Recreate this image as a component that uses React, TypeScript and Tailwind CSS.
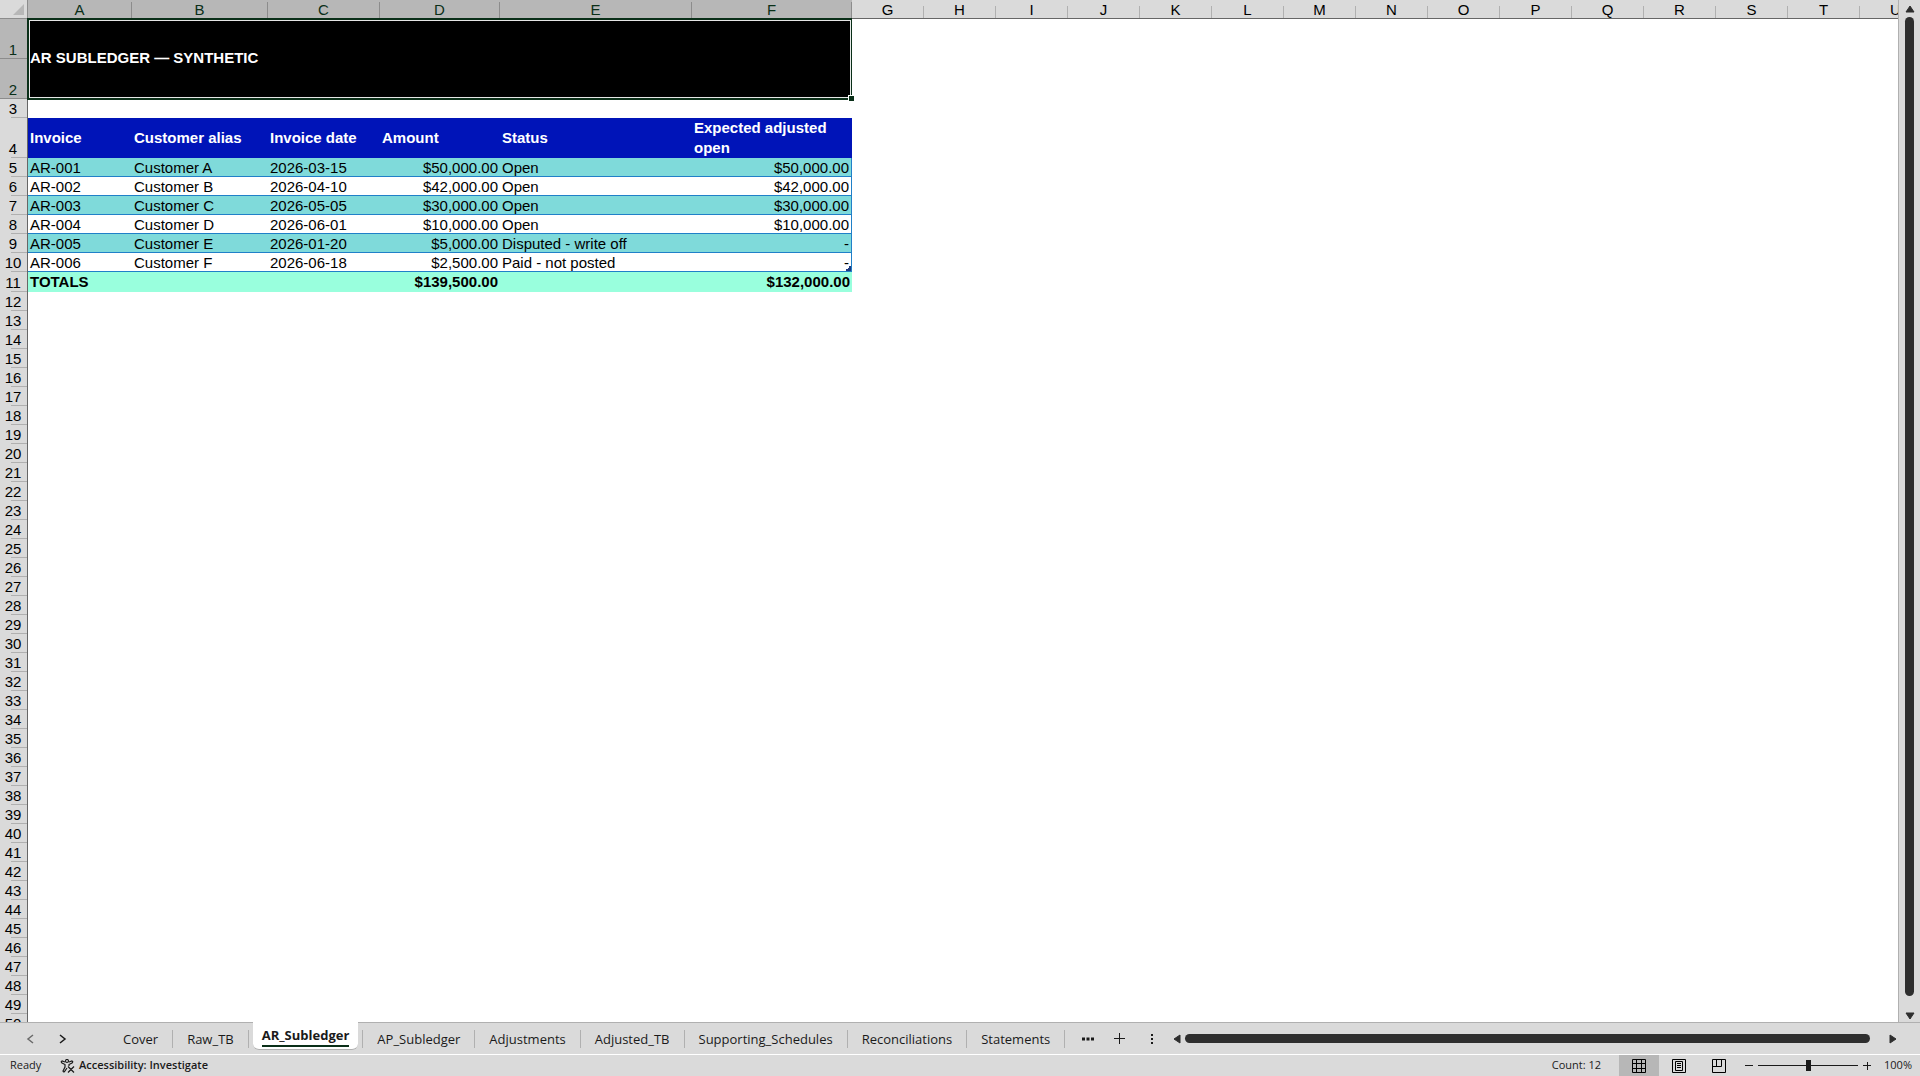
import { useState } from "react";
import type { ReactNode } from "react";

type Column = { id: string; width: number };

type Invoice = {
    id: string;
    customer: string;
    date: string;
    amount: string;
    status: string;
    open: string;
};

const tableColumns: Column[] = [
    { id: "A", width: 104 },
    { id: "B", width: 136 },
    { id: "C", width: 112 },
    { id: "D", width: 120 },
    { id: "E", width: 192 },
    { id: "F", width: 160 },
];

const emptyColumns: Column[] = "GHIJKLMNOPQRSTU".split("").map((id) => ({ id, width: 72 }));

const columns = [...tableColumns, ...emptyColumns];

const headings = ["Invoice", "Customer alias", "Invoice date", "Amount", "Status", "Expected adjusted open"];

const invoices: Invoice[] = [
    { id: "AR-001", customer: "Customer A", date: "2026-03-15", amount: "$50,000.00", status: "Open", open: "$50,000.00" },
    { id: "AR-002", customer: "Customer B", date: "2026-04-10", amount: "$42,000.00", status: "Open", open: "$42,000.00" },
    { id: "AR-003", customer: "Customer C", date: "2026-05-05", amount: "$30,000.00", status: "Open", open: "$30,000.00" },
    { id: "AR-004", customer: "Customer D", date: "2026-06-01", amount: "$10,000.00", status: "Open", open: "$10,000.00" },
    { id: "AR-005", customer: "Customer E", date: "2026-01-20", amount: "$5,000.00", status: "Disputed - write off", open: "-" },
    { id: "AR-006", customer: "Customer F", date: "2026-06-18", amount: "$2,500.00", status: "Paid - not posted", open: "-" },
];

const sheets = [
    "Cover",
    "Raw_TB",
    "AR_Subledger",
    "AP_Subledger",
    "Adjustments",
    "Adjusted_TB",
    "Supporting_Schedules",
    "Reconciliations",
    "Statements",
];

const emptyRows = Array.from({ length: 39 }, (_, i) => i + 12);

const ColumnHeader = ({ id, selected }: { id: string; selected: boolean }) => (
    <th scope="col" className={`p-0 font-normal border-b ${selected ? "bg-[#b7b7b7] text-[#0a2f18] border-[#7a7a7a]" : "bg-[#dadada] text-black border-[#666]"}`}>
        <div className="flex h-[18px] items-end">
            <span className="flex-1 text-center leading-4">{id}</span>
            <span className={`w-px ${selected ? "h-4 bg-[#8c8c8c]" : "h-3 bg-[#b0b0b0]"}`} />
        </div>
    </th>
);

const RowHeader = ({ row, selected = false }: { row: number; selected?: boolean }) => (
    <th scope="row" className={`h-px p-0 font-normal border-r border-[#666] ${selected ? "bg-[#b7b7b7] text-[#0a2f18]" : "bg-[#dadada] text-black"}`}>
        <div className="flex h-full flex-col justify-end">
            <span className="pr-px text-center leading-4">{row}</span>
            <span className={`h-px ${selected ? "bg-[#8c8c8c]" : "ml-[11px] bg-[#b0b0b0]"}`} />
        </div>
    </th>
);

const Sheet = () => (
    <table className="w-[1932px] table-fixed border-separate border-spacing-0 bg-white font-['Liberation_Sans',Arial,sans-serif] text-[15px] leading-4 text-black">
        <colgroup>
            <col className="w-7" />
            {columns.map((col) => (
                <col key={col.id} style={{ width: col.width }} />
            ))}
        </colgroup>
        <thead>
            <tr>
                <th className="border-b border-r border-[#8c8c8c] bg-[#dadada] p-0" aria-label="Select all">
                    <svg viewBox="0 0 11 11" className="ml-[13px] size-[11px]" fill="#b7b7b7">
                        <path d="M11 0v11H0z" />
                    </svg>
                </th>
                {columns.map((col, i) => (
                    <ColumnHeader key={col.id} id={col.id} selected={i < tableColumns.length} />
                ))}
            </tr>
        </thead>
        <tbody>
            <tr className="h-10">
                <RowHeader row={1} selected />
                <td colSpan={6} rowSpan={2} className="relative bg-black px-[2px] pb-[2px] pt-0 font-bold text-white">
                    AR SUBLEDGER — SYNTHETIC
                    <span className="absolute -inset-y-px -left-px right-0 border-2 border-[#0a2f18]" />
                    <span className="absolute inset-px border border-white/90" />
                    <span className="absolute -bottom-[2px] -right-[2px] size-[6px] border-l border-t border-white bg-[#0a2f18]" />
                </td>
            </tr>
            <tr className="h-10">
                <RowHeader row={2} selected />
            </tr>
            <tr className="h-[19px]">
                <RowHeader row={3} />
            </tr>
            <tr className="h-10">
                <RowHeader row={4} />
                {headings.map((heading) => (
                    <th key={heading} scope="col" className="bg-[#0014b8] px-[2px] py-0 text-left align-middle font-bold leading-5 text-white">
                        {heading}
                    </th>
                ))}
            </tr>
            {invoices.map((invoice, i) => (
                <tr key={invoice.id} className={`h-[19px] *:[td]:border-b *:[td]:border-[#2080c8] *:[td]:px-[2px] *:[td]:pb-0 *:[td]:pt-[2px] ${i % 2 === 0 ? "*:[td]:bg-[#7fdada]" : ""}`}>
                    <RowHeader row={i + 5} />
                    <td>{invoice.id}</td>
                    <td>{invoice.customer}</td>
                    <td>{invoice.date}</td>
                    <td className="text-right">{invoice.amount}</td>
                    <td>{invoice.status}</td>
                    <td className="relative border-r text-right">
                        {invoice.open}
                        {i === invoices.length - 1 && (
                            <svg viewBox="0 0 5 5" className="absolute bottom-0 right-0 size-[5px]" fill="#1f3b80">
                                <path d="M5 0v5H0V3h2V2h1V0z" />
                            </svg>
                        )}
                    </td>
                </tr>
            ))}
            <tr className="h-5 font-bold *:[td]:bg-[#99ffdd] *:[td]:px-[2px] *:[td]:py-0">
                <RowHeader row={11} />
                <td>TOTALS</td>
                <td />
                <td />
                <td className="text-right">$139,500.00</td>
                <td />
                <td className="text-right">$132,000.00</td>
            </tr>
            {emptyRows.map((row) => (
                <tr key={row} className="h-[19px]">
                    <RowHeader row={row} />
                </tr>
            ))}
        </tbody>
    </table>
);

const Arrow = ({ d, label }: { d: string; label: string }) => (
    <button aria-label={label} className="flex shrink-0 items-center justify-center">
        <svg viewBox="0 0 10 10" className="size-[10px]" fill="#2e2e2e" stroke="#2e2e2e" strokeLinejoin="round">
            <path d={d} />
        </svg>
    </button>
);

const VerticalScroll = () => (
    <div className="flex w-[22px] shrink-0 flex-col items-center border-l border-[#b0b0b0] bg-[#dadada] pb-px pt-1">
        <Arrow label="Scroll up" d="M1 8h8L5 2z" />
        <div className="mb-[15px] mt-[3px] w-[9px] flex-1 rounded-full bg-[#2e2e2e]" />
        <Arrow label="Scroll down" d="M1 2h8L5 8z" />
    </div>
);

const Chevron = ({ d, label, color }: { d: string; label: string; color: string }) => (
    <button aria-label={label} className="px-3">
        <svg viewBox="0 0 8 10" className="h-[10px] w-2" fill="none" stroke={color} strokeWidth="1.5">
            <path d={d} />
        </svg>
    </button>
);

const SheetTabs = () => {
    const [active, setActive] = useState("AR_Subledger");

    return (
        <div className="flex h-8 items-stretch border-t border-[#b0b0b0] bg-[#dadada] text-[13px] text-[#1a1a1a]">
            <div className="flex w-[109px] shrink-0 items-center gap-px pl-[14px]">
                <Chevron label="Previous sheet" color="#6a6a6a" d="M7 1 2 5l5 4" />
                <Chevron label="Next sheet" color="#1a1a1a" d="m1 1 5 4-5 4" />
            </div>
            <nav className="flex shrink-0">
                {sheets.map((sheet) => (
                    <div key={sheet} className="flex items-center">
                        {sheet === active ? (
                            <button className="-mt-px mb-1 ml-1 mr-1 flex items-center self-stretch rounded-b-md border-b border-[#b0b0b0] bg-white px-[9px] font-bold">
                                <span className="border-b-2 border-[#0a2f18] leading-5">{sheet}</span>
                            </button>
                        ) : (
                            <button onClick={() => setActive(sheet)} className="px-[14px] leading-5">{sheet}</button>
                        )}
                        <span className="h-[18px] w-px bg-[#b0b0b0]" />
                    </div>
                ))}
            </nav>
            <div className="flex shrink-0 items-center pl-[17px]">
                <button aria-label="More sheets">
                    <svg viewBox="0 0 12 4" className="h-1 w-3" fill="#1a1a1a">
                        <path d="M0 .5h3v3H0zM4.5 .5h3v3h-3zM9 .5h3v3H9z" />
                    </svg>
                </button>
                <button aria-label="New sheet" className="ml-5">
                    <svg viewBox="0 0 12 12" className="size-3" stroke="#1a1a1a">
                        <path d="M5.500 0v11M0 5.500h11" />
                    </svg>
                </button>
                <button aria-label="Resize tabs" className="ml-6">
                    <svg viewBox="0 0 4 12" className="h-3 w-1" fill="#1a1a1a">
                        <path d="M1 1h2v2H1zM1 5h2v2H1zM1 9h2v2H1z" />
                    </svg>
                </button>
            </div>
            <div className="ml-[18px] mr-[22px] flex min-w-0 flex-1 items-center">
                <Arrow label="Scroll left" d="M8 1v8L2 5z" />
                <div className="ml-[3px] mr-[18px] h-[9px] flex-1 rounded-full bg-[#2e2e2e]" />
                <Arrow label="Scroll right" d="M2 1v8l6-4z" />
            </div>
        </div>
    );
};

const ViewButton = ({ label, selected = false, children }: { label: string; selected?: boolean; children: ReactNode }) => (
    <button aria-label={label} className={`flex w-10 items-center justify-center self-stretch ${selected ? "bg-[#b7b7b7]" : ""}`}>
        <svg viewBox="0 0 14 14" className="size-[14px]" fill="none" stroke="#000">
            {children}
        </svg>
    </button>
);

const StatusBar = () => (
    <div className="flex h-[22px] items-center border-t border-white bg-[#dadada] text-[11px] text-[#1a1a1a]">
        <span className="w-[60px] pl-[10px]">Ready</span>
        <button className="flex items-center gap-1 font-semibold">
            <svg viewBox="0 0 15 14" className="h-[14px] w-[15px]" fill="none" stroke="#1a1a1a" strokeWidth="1.2">
                <circle cx="7" cy="2" r="1.5" />
                <path d="M5 3 2 2Q.5 2.500 2 4l3 1.500v2.500l-2 4q.5 1.500 1.500.5L7 9M9 3l3-1q1.500.5 0 2L9 5.500V7M8 7.500l6 6M14 7.500l-6 6" />
            </svg>
            Accessibility: Investigate
        </button>
        <span className="ml-auto mr-[18px]">Count: 12</span>
        <ViewButton label="Normal" selected>
            <path d="M.5 .5h13v13H.5zM4.500 .5v13M9.500 .5v13M.5 4.500h13M.5 9.500h13" />
        </ViewButton>
        <ViewButton label="Page layout">
            <path d="M.5 .5h13v13H.5zM3.500 2.500h7v9h-7zM5 4.500h4M5 6.500h4M5 8.500h4" />
        </ViewButton>
        <ViewButton label="Page break preview">
            <path d="M.5 .5h13v13H.5zM4.500 .5v7M9.500 .5v7M.5 7.500h9" />
        </ViewButton>
        <button aria-label="Zoom out" className="ml-[6px]">
            <svg viewBox="0 0 8 8" className="size-2" stroke="#1a1a1a"><path d="M0 3.500h8" /></svg>
        </button>
        <input
            type="range"
            aria-label="Zoom"
            min={0}
            max={100}
            defaultValue={50}
            className="ml-[5px] mr-[5px] h-[11px] w-[100px] appearance-none bg-[linear-gradient(#1a1a1a,#1a1a1a)] bg-[length:100%_1px] bg-center bg-no-repeat [&::-webkit-slider-thumb]:h-[11px] [&::-webkit-slider-thumb]:w-[5px] [&::-webkit-slider-thumb]:appearance-none [&::-webkit-slider-thumb]:bg-[#1a1a1a]"
        />
        <button aria-label="Zoom in">
            <svg viewBox="0 0 8 8" className="size-2" stroke="#1a1a1a"><path d="M0 3.500h8M4.500 0v8" /></svg>
        </button>
        <button className="ml-[13px] mr-2">100%</button>
    </div>
);

const App = () => (
    <div className="flex h-screen flex-col overflow-hidden bg-[#dadada] font-['Open_Sans','Noto_Sans',sans-serif]">
        <div className="flex min-h-0 flex-1">
            <div className="min-w-0 flex-1 overflow-hidden bg-white">
                <Sheet />
            </div>
            <VerticalScroll />
        </div>
        <SheetTabs />
        <StatusBar />
    </div>
);

export default App;
